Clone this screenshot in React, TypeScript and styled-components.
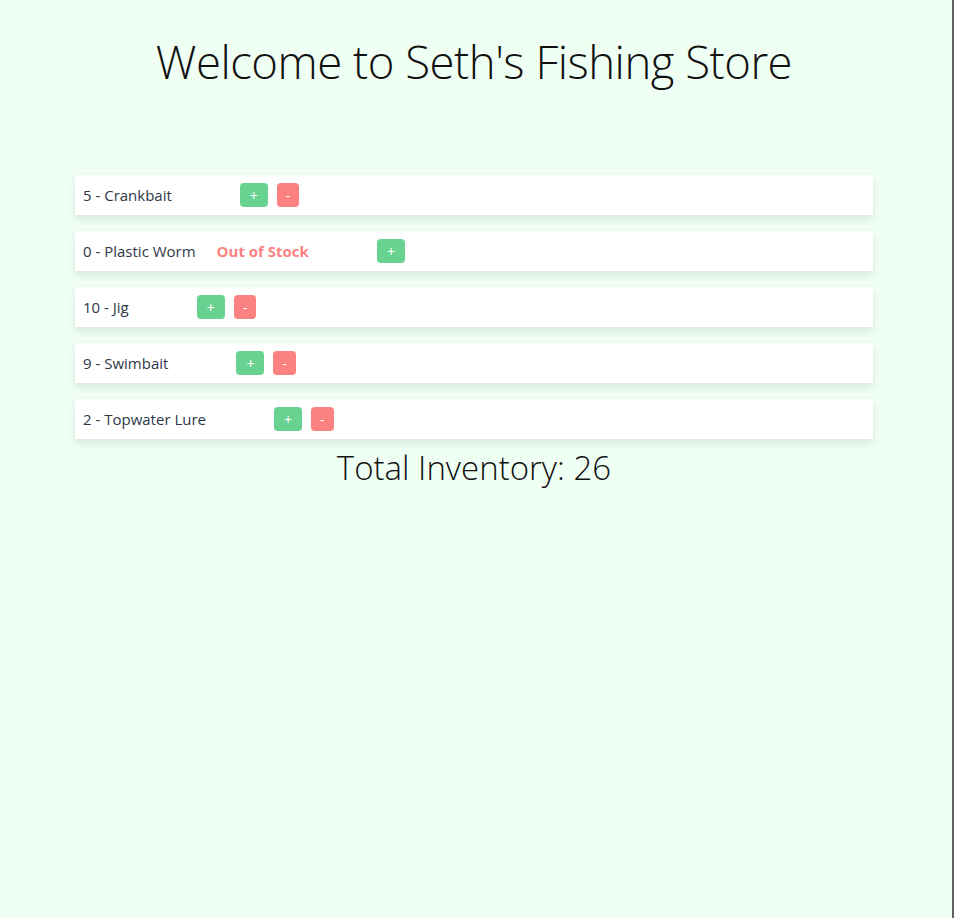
import styled, { createGlobalStyle } from 'styled-components';

type Item = { name: string; count: number };

const items: Item[] = [
  { name: 'Crankbait', count: 5 },
  { name: 'Plastic Worm', count: 0 },
  { name: 'Jig', count: 10 },
  { name: 'Swimbait', count: 9 },
  { name: 'Topwater Lure', count: 2 },
];

const GlobalStyle = createGlobalStyle`
  html, body {
    margin: 0;
    padding: 0;
    height: 100%;
  }
  body {
    background: #f0fff4;
    font-family: 'Open Sans', 'Noto Sans', sans-serif;
  }
  #root {
    min-height: 100%;
  }
`;

const App = () => {
  const total = items.reduce((sum, i) => sum + i.count, 0);
  return (
    <>
      <GlobalStyle />
      <Page>
        <Main>
          <Title>Welcome to Seth's Fishing Store</Title>
          <List>
            {items.map((item) => (
              <Row key={item.name}>
                <Label>
                  {item.count} - {item.name}
                </Label>
                {item.count === 0 && <Warning>Out of Stock</Warning>}
                <Controls>
                  <Button tone="add">+</Button>
                  {item.count > 0 && <Button tone="remove">-</Button>}
                </Controls>
              </Row>
            ))}
          </List>
          <Total>Total Inventory: {total}</Total>
        </Main>
        <Edge />
      </Page>
    </>
  );
};

const Page = styled.div`
  display: flex;
  min-height: 918px;
`;

const Main = styled.div`
  flex: 1;
  display: flex;
  flex-direction: column;
  align-items: center;
  padding-right: 4px;
`;

const Edge = styled.div`
  width: 2px;
  background: #5f6361;
`;

const Title = styled.h1`
  margin: 29px 0 0;
  font-size: 45.5px;
  font-weight: 300;
  line-height: 64px;
  color: #111;
  letter-spacing: -0.5px;
`;

const List = styled.div`
  display: flex;
  flex-direction: column;
  gap: 16px;
  width: calc(100% - 150px);
  margin-top: 82px;
`;

const Row = styled.div`
  display: flex;
  align-items: center;
  height: 40px;
  padding: 0 8px;
  background: #fff;
  box-shadow: 0 4px 8px rgba(0, 0, 0, 0.1);
  box-sizing: border-box;
`;

const Label = styled.span`
  font-size: 15px;
  color: #2d3748;
`;

const Warning = styled.span`
  margin-left: 21px;
  font-size: 15px;
  font-weight: 700;
  color: #fc8181;
`;

const Controls = styled.div`
  display: flex;
  gap: 9px;
  margin-left: 68px;
`;

const Button = styled.button<{ tone: 'add' | 'remove' }>`
  height: 24px;
  padding: 0 ${({ tone }) => (tone === 'add' ? '10px' : '9px')};
  border: none;
  border-radius: 4px;
  font-family: 'Open Sans', sans-serif;
  font-size: 14px;
  color: #fff;
  background: ${({ tone }) => (tone === 'add' ? '#68d391' : '#fc8181')};
  cursor: pointer;
`;

const Total = styled.h2`
  margin: 5px 0 0;
  font-size: 33px;
  font-weight: 300;
  line-height: 48px;
  color: #111;
`;

export default App;
